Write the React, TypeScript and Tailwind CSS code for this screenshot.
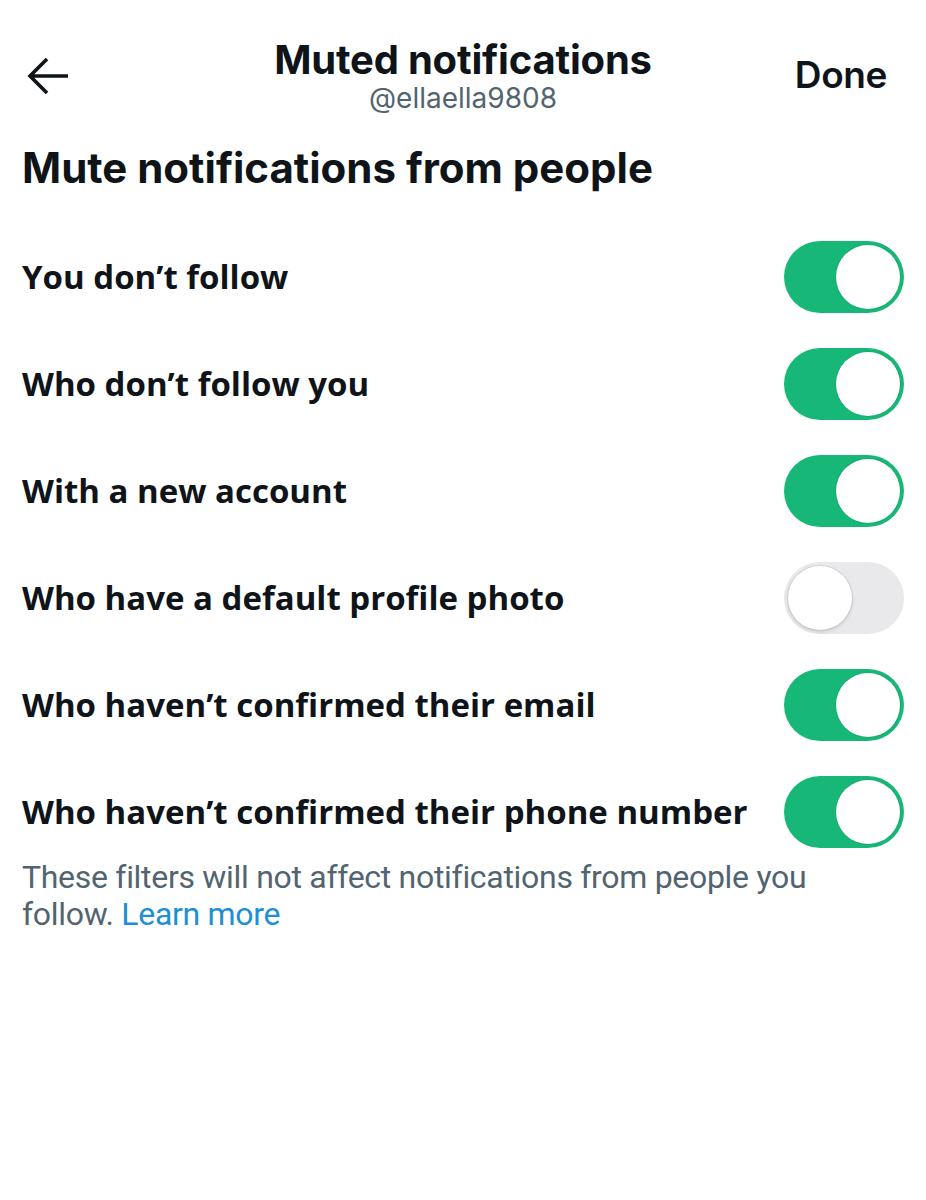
import React from "react";

const rows = [
  { label: "You don’t follow", on: true },
  { label: "Who don’t follow you", on: true },
  { label: "With a new account", on: true },
  { label: "Who have a default profile photo", on: false },
  { label: "Who haven’t confirmed their email", on: true },
  { label: "Who haven’t confirmed their phone number", on: true },
];

function Toggle({ on }: { on: boolean }) {
  return (
    <div
      className={`relative h-[72px] w-[120px] shrink-0 rounded-full ${on ? "bg-[#17b877]" : "bg-[#e9e9eb]"}`}
    >
      <span
        className={`absolute top-[4px] h-[64px] w-[64px] rounded-full bg-white ${
          on ? "right-[4px] shadow-[0_0_0_1px_rgba(0,0,0,0.06)]" : "left-[4px] shadow-[0_0_0_1px_rgba(0,0,0,0.08),0_2px_4px_rgba(0,0,0,0.12)]"
        }`}
      />
    </div>
  );
}

export default function App() {
  return (
    <div className="min-h-[1200px] w-[926px] bg-white text-[#0f1419] [font-family:Inter,'Liberation_Sans',sans-serif]">
      <header className="grid grid-cols-[1fr_auto_1fr] items-start px-[26px] pt-[38px]">
        <button type="button" className="mt-[19px] flex h-[38px] w-[44px] items-center" aria-label="Back">
          <svg width="43" height="38" viewBox="0 0 43 38" fill="none" stroke="#0f1419" strokeWidth="3.6" strokeLinejoin="miter">
            <path d="M42 19H4M21 2 4 19l17 17" />
          </svg>
        </button>
        <div className="flex flex-col items-center">
          <h1 className="text-[40px] font-bold leading-[44px] tracking-[-0.2px]">Muted notifications</h1>
          <p className="mt-[1px] text-[28px] leading-[30px] text-[#536471]">@ellaella9808</p>
        </div>
        <button type="button" className="mr-[13px] mt-[16px] justify-self-end text-[37px] font-semibold leading-[42px] tracking-[-0.4px]">Done</button>
      </header>

      <main className="px-[22px]">
        <h2 className="mt-[31px] text-[42px] font-bold leading-[48px]">Mute notifications from people</h2>
        <div className="mt-[31px] flex flex-col">
          {rows.map((row) => (
            <div key={row.label} className="flex h-[107px] items-center justify-between">
              <span className="text-[33px] font-bold [font-family:'Open_Sans',sans-serif]">{row.label}</span>
              <Toggle on={row.on} />
            </div>
          ))}
        </div>
        <p className="-mt-[6px] max-w-[820px] text-[32px] leading-[37px] tracking-[-0.3px] text-[#536471] [font-family:Roboto,sans-serif]">
          These filters will not affect notifications from people you follow.{" "}
          <a href="#" className="text-[#1d8fd6]">Learn more</a>
        </p>
      </main>
    </div>
  );
}
